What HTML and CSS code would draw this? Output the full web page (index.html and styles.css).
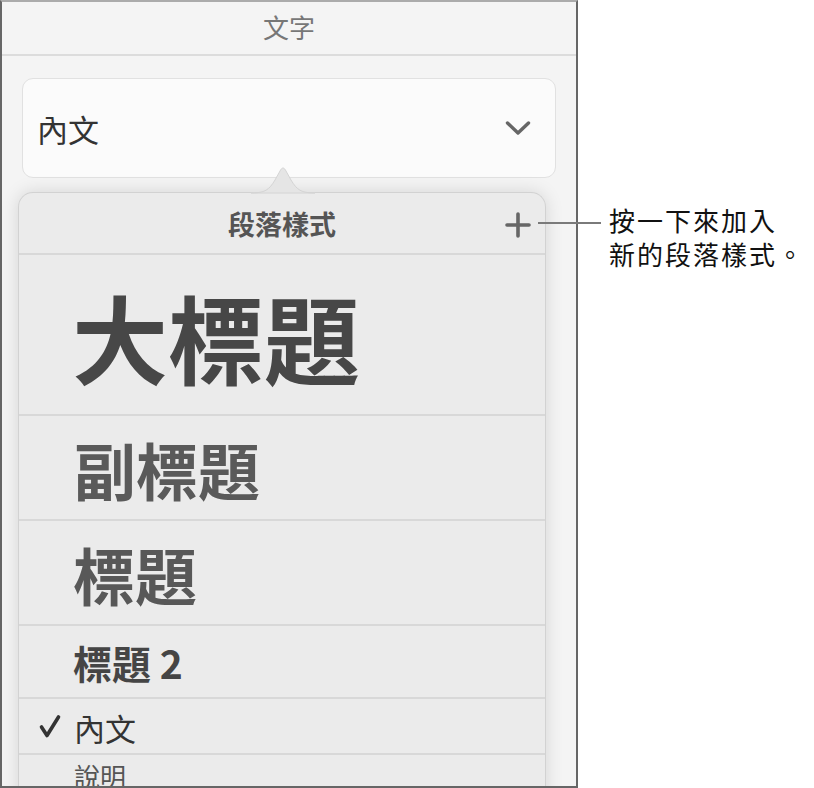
FILE: index.html
```html
<!DOCTYPE html>
<html lang="zh-Hant">
<head>
<meta charset="utf-8">
<link rel="stylesheet" href="styles.css">
</head>
<body>
<div class="page">
  <div class="panel">
    <div class="panel-header">文字</div>
    <div class="selector">
      <span class="selector-label">內文</span>
      <svg class="chevron" width="26" height="16" viewBox="0 0 26 16"><path d="M2.5 3 L13 13 L23.5 3" fill="none" stroke="#666" stroke-width="3.4" stroke-linecap="round" stroke-linejoin="round"/></svg>
    </div>
    <div class="popover">
      <svg class="arrow" width="64" height="28" viewBox="0 0 64 28"><path d="M0 27 C14 27 18 24 24 14 L29 5 C31 1 33 1 35 5 L40 14 C46 24 50 27 64 27 Z" fill="#e5e5e5" stroke="#d4d4d4" stroke-width="1"/></svg>
      <div class="pop-header">
        <span class="pop-title">段落樣式</span>
        <svg class="plus" width="26" height="26" viewBox="0 0 26 26"><path d="M13 2 V24 M2 13 H24" stroke="#666" stroke-width="3.6" stroke-linecap="round"/></svg>
      </div>
      <div class="row row-xl"><span>大標題</span></div>
      <div class="row row-l"><span>副標題</span></div>
      <div class="row row-l2"><span>標題</span></div>
      <div class="row row-m"><span>標題 2</span></div>
      <div class="row row-body"><svg class="check" width="22" height="24" viewBox="0 0 22 24"><path d="M2.5 13 L8 21.5 L19.5 3" fill="none" stroke="#333" stroke-width="3.6" stroke-linecap="round" stroke-linejoin="round"/></svg><span>內文</span></div>
      <div class="row row-cap"><span>說明</span></div>
    </div>
  </div>
  <div class="callout">
    <div class="callout-line"></div>
    <div class="callout-text">按一下來加入<br>新的段落樣式。</div>
  </div>
</div>
</body>
</html>
```

FILE: styles.css
```css
* { box-sizing: border-box; }
html, body { margin: 0; padding: 0; background: #fff; }
body {
  font-family: "Noto Sans CJK TC", "Noto Sans", sans-serif;
  width: 814px;
  height: 788px;
  overflow: hidden;
}
.page { position: relative; width: 814px; height: 788px; }

.panel {
  width: 578px;
  height: 788px;
  background: #f4f4f4;
  border-top: 2px solid #ababab;
  border-left: 2px solid #666;
  border-right: 2px solid #666;
  border-bottom: 2px solid #666;
  overflow: hidden;
  display: flex;
  flex-direction: column;
}

.panel-header {
  flex: none;
  height: 54px;
  border-bottom: 2px solid #dcdcdc;
  display: flex;
  align-items: center;
  justify-content: center;
  font-size: 26px;
  color: #777;
  line-height: 1;
  padding-bottom: 2px;
}

.selector {
  flex: none;
  margin: 22px 20px 0 20px;
  height: 100px;
  background: #fbfbfb;
  border: 1.5px solid #e1e1e1;
  border-radius: 11px;
  display: flex;
  align-items: center;
  justify-content: space-between;
  padding: 0 24px 0 14px;
}
.selector-label {
  font-size: 31px;
  color: #333;
  line-height: 1;
}
.chevron { display: block; }

.popover {
  flex: none;
  position: relative;
  margin: 14px 0 0 16px;
  width: 528px;
  height: 620px;
  background: #ebebeb;
  border: 1px solid #d2d2d2;
  border-bottom: none;
  border-radius: 15px 15px 0 0;
  box-shadow: 0 0 18px rgba(0, 0, 0, 0.13);
}
.arrow {
  position: absolute;
  left: 232px;
  top: -27px;
}

.pop-header {
  height: 62px;
  border-bottom: 2px solid #d8d8d8;
  display: flex;
  align-items: center;
  justify-content: center;
  position: relative;
}
.pop-title {
  font-size: 27px;
  font-weight: 700;
  color: #555;
  line-height: 1;
}
.plus {
  position: absolute;
  right: 14px;
  top: 19px;
}

.row {
  display: flex;
  align-items: center;
  padding-left: 55px;
  border-bottom: 2px solid #d8d8d8;
  line-height: 1;
  font-weight: 700;
}
.row-xl { height: 161px; font-size: 96px; color: #474747; padding-top: 2px; padding-left: 53px; }
.row-l { height: 105px; font-size: 62px; color: #5a5a5a; padding-top: 2px; }
.row-l2 { height: 105px; font-size: 62px; color: #585858; padding-top: 2px; padding-left: 54px; }
.row-m { height: 73px; font-size: 39px; color: #454545; padding-top: 2px; padding-left: 54px; }
.row-body {
  height: 56px;
  font-size: 31px;
  font-weight: 400;
  color: #333;
  padding-left: 20px;
  padding-top: 2px;
}
.check {
  display: block;
  margin-right: 13px;
  margin-top: -2px;
}
.row-cap {
  height: 60px;
  align-items: flex-start;
  padding-top: 8px;
  font-size: 26px;
  font-weight: 400;
  color: #555;
  border-bottom: none;
}

.callout {
  position: absolute;
  left: 538px;
  top: 203px;
  display: flex;
  align-items: flex-start;
}
.callout-line {
  width: 63px;
  height: 2px;
  background: #7a7a7a;
  margin-top: 19px;
}
.callout-text {
  margin-left: 8px;
  font-size: 26px;
  line-height: 34px;
  color: #111;
  letter-spacing: 2px;
}
```
